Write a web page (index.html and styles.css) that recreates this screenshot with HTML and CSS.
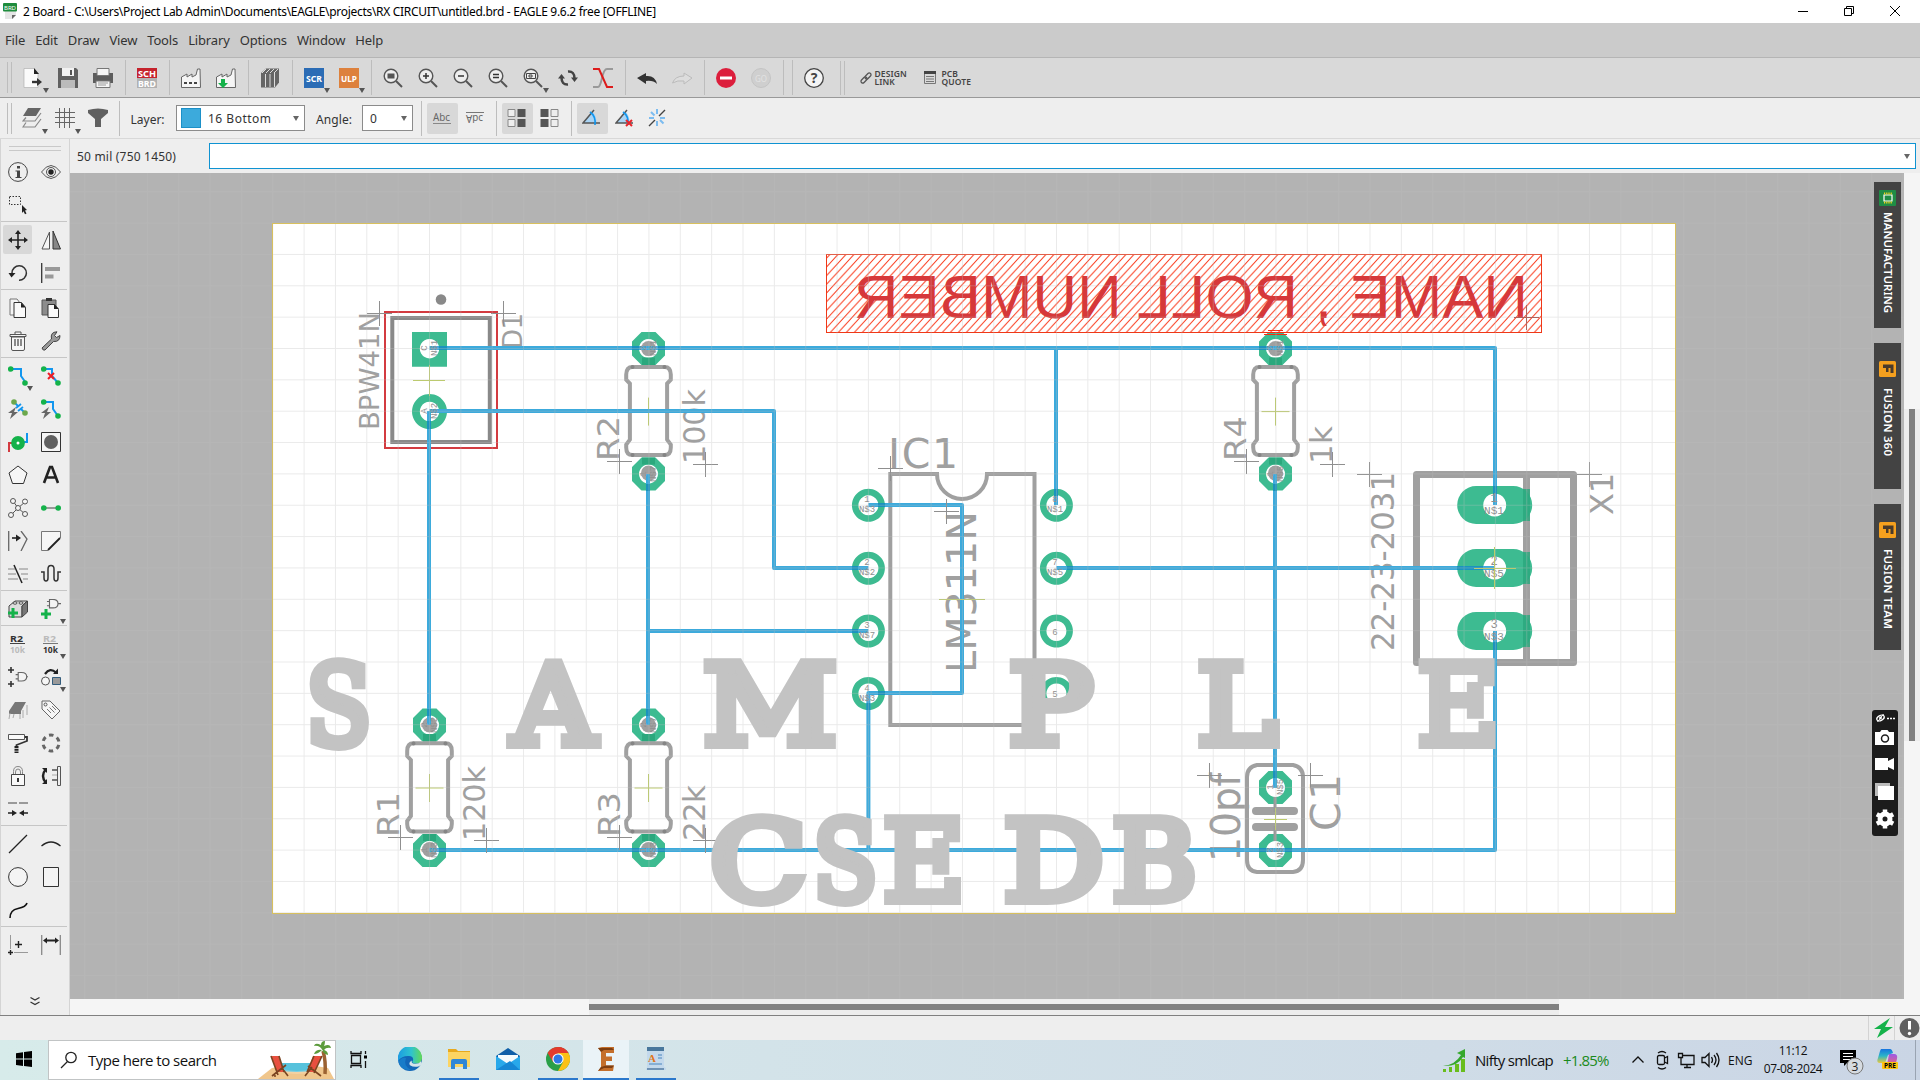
FILE: index.html
```html
<!DOCTYPE html>
<html lang="en">
<head>
<meta charset="utf-8">
<title>2 Board - EAGLE 9.6.2 free</title>
<link rel="stylesheet" href="styles.css">
</head>
<body>
<svg class="defs" width="0" height="0">
  <defs>
    <g id="lens"><circle cx="8" cy="8" r="6.8" fill="#eee" stroke="#555" stroke-width="1.4"/><path d="M13 13l6 6" stroke="#555" stroke-width="2"/></g>
    <g id="gate"><path d="M3 1.500h4q6 0 6 5t-6 5H3zM13 6.500h4M0 4h3M0 9h3" fill="#f4f4f4" stroke="#666" stroke-width="1.300"/></g>
    <g id="angle"><path d="M1 15L11 4q4 5 3.500 11z" fill="#a9d4f5"/><path d="M12 2L1 15h17" fill="none" stroke="#555" stroke-width="1.500"/><path d="M8 4q6 4 5 13" fill="none" stroke="#1296ee" stroke-width="1.600"/></g>
    <g id="fusion"><rect width="17" height="16" rx="1.500" fill="#f5a01e"/><path d="M4 3.500h10.500v8.500h-3V7H9.500v4H7V7H4z" fill="#4a3a2a"/></g>
    <g id="cross"><path d="M-12.500 0h25M0-12.500v25"/></g>
    <g id="oct"><path fill-rule="evenodd" d="M-7-16.500H7L16.500-7V7L7 16.500H-7L-16.500 7V-7zM0-9.500a9.500 9.500 0 1 0 .01 0z"/></g>
    <g id="ring"><path fill-rule="evenodd" d="M0-16.500a16.500 16.500 0 1 0 .01 0zM0-10a10 10 0 1 0 .01 0z"/></g>
    <g id="longpad"><path fill-rule="evenodd" d="M-18.500-19h37a19 19 0 0 1 0 38h-37a19 19 0 0 1 0-38zM0-11.500a11.500 11.500 0 1 0 .01 0z"/></g>
    <g id="resistor">
      <circle r="7.500" fill="#a0a0a0"/><circle cy="124.500" r="7.500" fill="#a0a0a0"/>
      <use href="#oct" fill="#3dbb91"/><use href="#oct" y="125.400" fill="#3dbb91"/>
      <path d="M-6.500 9h13v7.500h-13zM-6.500 109h13v7h-13z" fill="#2ba87d"/>
      <path d="M-16 18.300H16Q22.300 18.300 22.300 26V31L18.600 35V91L22.300 96V99Q22.300 106.500 16 106.500H-16Q-22.300 106.500-22.300 99V96L-18.600 91V35L-22.300 31V26Q-22.300 18.300-16 18.300Z" fill="none" stroke="#a0a0a0" stroke-width="4"/>
      <path d="M-16 16.500a2 2 0 1 0 .01 0zM16 16.500a2 2 0 1 0 .01 0zM-16 104.500a2 2 0 1 0 .01 0zM16 104.500a2 2 0 1 0 .01 0z" fill="#858585"/>
      <path d="M-14 63h28M0 49v28" stroke="#bccb66"/>
    </g>
    <pattern id="hatch" width="8" height="8.700" patternUnits="userSpaceOnUse"><path d="M-1 9.790L9-1.090M-1 1.090L1-1.090M7 9.790L9 7.610" stroke="#fa3a1c" stroke-width="1"/></pattern>
    <pattern id="grid" x="429" y="348" width="31.350" height="31.350" patternUnits="userSpaceOnUse"><path d="M.5 0V31.350M0 .5H31.350" stroke="#bebebe" stroke-opacity=".32"/></pattern>
  </defs>
</svg>

<header class="titlebar">
  <svg class="app" width="14" height="16" viewBox="0 0 14 16"><path d="M2 6h11v6l-3 4H2z" fill="#e6e6e6"/><path d="M13 12H9v4z" fill="#666"/><rect width="14" height="8.500" rx="1" fill="#1f8c3d"/><text x="1" y="6.500" font-size="5.500" fill="#fff" textLength="12" lengthAdjust="spacingAndGlyphs">BRD</text></svg>
  <span class="caption">2 Board - C:\Users\Project Lab Admin\Documents\EAGLE\projects\RX CIRCUIT\untitled.brd - EAGLE 9.6.2 free [OFFLINE]</span>
  <div class="winbtns">
    <svg width="46" height="22"><path d="M18 10.500h10" stroke="#000"/></svg>
    <svg width="46" height="22"><path d="M18.500 7.500h7v7h-7zM20.500 7.500v-2h7v7h-2" fill="none" stroke="#000"/></svg>
    <svg width="46" height="22"><path d="M18 5l10 10M28 5L18 15" stroke="#000"/></svg>
  </div>
</header>

<nav class="menubar"><span>File</span><span>Edit</span><span>Draw</span><span>View</span><span>Tools</span><span>Library</span><span>Options</span><span>Window</span><span>Help</span></nav>

<div class="toolbar main">
  <i class="grip"></i>
  <b class="btn drop"><svg width="20" height="20"><path d="M1 .5h10l4 5v14H1z" fill="#fafafa" stroke="#aaa" stroke-width=".6"/><path d="M11 0l5 6h-5z" fill="#222"/><path d="M9 14h6" stroke="#333" stroke-width="2.400"/><path d="M14 10l5 4-5 4z" fill="#333"/></svg></b>
  <b class="btn"><svg width="20" height="20"><path d="M0 0h18l2 2v18H0z" fill="#606060"/><path d="M4 0h12v8H4z" fill="#f2f2f2"/><path d="M12 2h2v5h-2z" fill="#555"/><path d="M3 12h14v8H3z" fill="#bbb"/></svg></b>
  <b class="btn"><svg width="20" height="20"><path d="M0 5h20v10H0z" fill="#5d5d5d"/><path d="M4 .5h12v7H4z" fill="#f5f5f5" stroke="#777"/><path d="M3 13h14v6.500H3z" fill="#f5f5f5" stroke="#777"/><path d="M5 15h10M5 17h8" stroke="#999"/></svg></b>
  <i class="sep"></i>
  <b class="btn"><svg width="20" height="20"><path d="M0 0h20v10H0z" fill="#c5232d"/><path d="M0 10h20v10H0z" fill="#b2b2b2"/><g font-size="9.500" font-weight="bold" fill="#fff"><text x="1" y="8.500" textLength="18" lengthAdjust="spacingAndGlyphs">SCH</text><text x="1" y="18.500" textLength="18" lengthAdjust="spacingAndGlyphs">BRD</text></g></svg></b>
  <i class="sep"></i>
  <b class="btn"><svg width="20" height="20"><path d="M.5 19.500V9L6 6v3l5-3v3l4-2 1.500-6h2.500l.5 18.500z" fill="#f5f5f5" stroke="#666"/><path d="M3 15h14" stroke="#444" stroke-width="2" stroke-dasharray="3 2"/></svg></b>
  <b class="btn"><svg width="20" height="20"><path d="M.5 19.500V9L6 6v3l5-3v3l4-2 1.500-6h2.500l.5 18.500z" fill="#f5f5f5" stroke="#666"/><path d="M5 11h4v4h3l-5 5-5-5h3z" fill="#14b24a"/></svg></b>
  <i class="sep"></i>
  <b class="btn"><svg width="20" height="20"><path d="M1 5l5-4.500h13v14L15 19.500H1z" fill="#666"/><path d="M2 5l4-4M6 5l4-4M10 5l4-4M14 5l4-4M5.500 6v13M10 6v13M14.500 5v14" stroke="#ddd"/></svg></b>
  <i class="sep"></i>
  <b class="btn drop"><svg width="20" height="20"><path d="M0 0h20v20H0z" fill="#2b6cb5"/><text x="2" y="13.500" font-size="9.500" font-weight="bold" fill="#fff" textLength="16" lengthAdjust="spacingAndGlyphs">SCR</text></svg></b>
  <b class="btn drop"><svg width="20" height="20"><path d="M0 0h20v20H0z" fill="#dd813d"/><text x="2" y="13.500" font-size="9.500" font-weight="bold" fill="#fff" textLength="16" lengthAdjust="spacingAndGlyphs">ULP</text></svg></b>
  <i class="sep"></i>
  <b class="btn"><svg width="20" height="20"><use href="#lens"/><path d="M4.500 5.500h7v5h-7z" fill="#555"/></svg></b>
  <b class="btn"><svg width="20" height="20"><use href="#lens"/><path d="M5 8h6M8 5v6" stroke="#333" stroke-width="1.500"/></svg></b>
  <b class="btn"><svg width="20" height="20"><use href="#lens"/><path d="M5 8h6" stroke="#333" stroke-width="1.500"/></svg></b>
  <b class="btn"><svg width="20" height="20"><use href="#lens"/><path d="M5 6.500h6M5 9.500h6" stroke="#333" stroke-width="1.500"/></svg></b>
  <b class="btn drop"><svg width="20" height="20"><use href="#lens"/><path d="M3.500 5.500h9v5h-9zM6 7h3v2H6z" fill="none" stroke="#444"/></svg></b>
  <b class="btn"><svg width="20" height="20"><path d="M10 3.500q6.500-.5 6.500 7M10 16.500q-6.500.5-6.500-7" fill="none" stroke="#444" stroke-width="2.500"/><path d="M13 9.500h7L16.500 14zM0 10.500L3.500 6 7 10.500z" fill="#444"/></svg></b>
  <b class="btn"><svg width="20" height="20"><path d="M0 19h5q2 0 4-9t5-9h6" fill="none" stroke="#999" stroke-width="2"/><path d="M0 1h6l8 18h6" fill="none" stroke="#dd1c1c" stroke-width="2"/></svg></b>
  <i class="sep"></i>
  <b class="btn"><svg width="20" height="20"><path d="M0 10l9-5v3q9-1 11 8-4-4-11-3v3z" fill="#333"/></svg></b>
  <b class="btn"><svg width="20" height="20"><path d="M20 10l-8-5v3Q3 8 .500 15q5-3 11.500-2v3z" fill="#ddd" stroke="#bbb"/></svg></b>
  <i class="sep"></i>
  <b class="btn"><svg width="20" height="20"><circle cx="10" cy="10" r="10" fill="#dc1e3c"/><path d="M4 10h12" stroke="#fff" stroke-width="3"/></svg></b>
  <b class="btn"><svg width="20" height="20"><circle cx="10" cy="10" r="9.500" fill="#cfcfcf" stroke="#c4c4c4"/><text x="4" y="13.500" font-size="9.500" fill="#e2e2e2" textLength="12" lengthAdjust="spacingAndGlyphs">GO</text></svg></b>
  <i class="sep"></i><i class="sep"></i>
  <b class="btn"><svg width="20" height="20"><circle cx="10" cy="10" r="9.300" fill="#f4f4f4" stroke="#444" stroke-width="1.300"/><text x="10" y="15" text-anchor="middle" font-size="14" font-weight="bold" fill="#444">?</text></svg></b>
  <i class="grip second"></i>
  <div class="link"><svg width="12" height="12" viewBox="0 0 12 12"><g fill="none" stroke="#555" stroke-width="1.300"><rect x="-3.500" y="-1.800" width="7" height="3.600" rx="1.800" transform="translate(4 8) rotate(-45)"/><rect x="-3.500" y="-1.800" width="7" height="3.600" rx="1.800" transform="translate(8 4) rotate(-45)"/></g></svg><span>DESIGN<br>LINK</span></div>
  <div class="link quote"><svg width="12" height="13"><path d="M0 0h12v3H0z" fill="#444"/><path d="M.5 3v9.500h11V3M2 5.500h8M2 8h8M2 10.500h8" fill="none" stroke="#777"/></svg><span>PCB<br>QUOTE</span></div>
</div>

<div class="toolbar params">
  <i class="grip"></i>
  <b class="btn drop"><svg width="20" height="20"><path d="M1 8L6 0h13l-5 8z" fill="#666"/><path d="M4 9.500L1 13h12l6-8M4 14.500L1 19h12l6-8" fill="none" stroke="#888" stroke-width="1.200"/></svg></b>
  <b class="btn drop"><svg width="20" height="20"><path d="M4.500 0v20M9.500 0v20M14.500 0v20M0 4.500h20M0 9.500h20M0 14.500h20" stroke="#666"/></svg></b>
  <b class="btn"><svg width="20" height="20"><path d="M0 2q10-3 20 0v3l-7 6v8H7v-8L0 5z" fill="#606060"/></svg></b>
  <i class="sep"></i>
  <span class="lbl layer">Layer:</span>
  <div class="combo wide"><i class="swatch"></i><span class="value">16 Bottom</span><i class="arrow"></i></div>
  <span class="lbl ang">Angle:</span>
  <div class="combo narrow"><span>0</span><i class="arrow"></i></div>
  <i class="sep first"></i>
  <b class="btn on"><svg width="20" height="14"><text x="1" y="10" font-size="10.500" fill="#666" textLength="17" lengthAdjust="spacingAndGlyphs">Abc</text><path d="M1 12.500h18" stroke="#888"/></svg></b>
  <b class="btn"><svg width="20" height="14"><g transform="matrix(1 0 0 -1 0 4)"><text x="1" y="0" font-size="10.500" fill="#666" textLength="17" lengthAdjust="spacingAndGlyphs">Abc</text></g><path d="M1 1.500h18" stroke="#777"/></svg></b>
  <i class="sep"></i>
  <b class="btn on"><svg width="20" height="20"><path d="M1 1.500h7v7H1zM1 11.500h7v7H1z" fill="#eee" stroke="#888"/><path d="M10.500 1h8v8h-8zM10.500 11h8v8h-8z" fill="#555"/></svg></b>
  <b class="btn"><svg width="20" height="20"><path d="M11 1.500h7v7h-7zM11 11.500h7v7h-7z" fill="#eee" stroke="#888"/><path d="M.5 1h8v8h-8zM.5 11h8v8h-8z" fill="#555"/></svg></b>
  <i class="sep"></i>
  <b class="btn on"><svg width="20" height="20"><use href="#angle"/></svg></b>
  <b class="btn"><svg width="20" height="20"><use href="#angle"/><path d="M11 12l6 6M17 12l-6 6" stroke="#e8252b" stroke-width="2"/></svg></b>
  <b class="btn"><svg width="20" height="20"><path d="M9 1v5M9 13v5M1 10h5M12 10h5M3 4l3.500 3.500M12 12l3.500 3.500" stroke="#7cbcf0" stroke-width="2"/><path d="M1 18l6-6M11 8l6-6" stroke="#444" stroke-width="1.400"/></svg></b>
</div>

<main class="work">
  <aside class="palette">
    <i class="hgrip"></i>
    <section>
      <b><svg width="20" height="20"><circle cx="10" cy="10" r="9.400" fill="none" stroke="#444"/><path d="M9 4h3v2.500H9zM7.500 8.500H12V15h1.500v1H7.500v-1H9V9.500H7.500z" fill="#444"/></svg></b>
      <b><svg width="20" height="20"><path d="M.5 10q9.500-13 19 0-9.500 13-19 0z" fill="none" stroke="#555"/><circle cx="10" cy="10" r="4.500" fill="none" stroke="#555"/><circle cx="10" cy="10" r="2.700" fill="#222"/></svg></b>
      <b><svg width="20" height="20"><path d="M1.500 1.500h11v8h-11z" fill="none" stroke="#333" stroke-dasharray="1.500 1.500"/><path d="M14 10l5 5-2 .5 1.500 3-1.500.8-1.500-3-1.500 1.700z" fill="#222"/></svg></b>
    </section>
    <section>
      <b class="on"><svg width="20" height="20"><path d="M10 2v16M2 10h16" stroke="#222" stroke-width="1.600"/><path d="M10 0l3 4H7zM10 20l3-4H7zM0 10l4-3v6zM20 10l-4-3v6z" fill="#222"/></svg></b>
      <b><svg width="20" height="20"><path d="M8.500 2v17H1z" fill="#f6f6f6" stroke="#555"/><path d="M12 1v18h7.500z" fill="#888" stroke="#333"/></svg></b>
      <b><svg width="20" height="20"><path d="M4 10A7.200 7.200 0 1 1 11 17.200" fill="none" stroke="#333" stroke-width="1.500"/><path d="M.5 10h7l-4 4.500z" fill="#222"/></svg></b>
      <b><svg width="20" height="20"><path d="M.7 0v20" stroke="#333" stroke-width="1.300"/><path d="M4 4h15v4H4zM4 11.500h8.500v4H4z" fill="#999"/></svg></b>
    </section>
    <section>
      <b><svg width="20" height="20"><path d="M2 1h7l3 4v12H2z" fill="#f5f5f5" stroke="#777"/><path d="M6 4.500h7.500l4 5v10H6z" fill="#fafafa" stroke="#333"/><path d="M13 4.500l5 5h-5z" fill="#222"/></svg></b>
      <b><svg width="20" height="20"><path d="M1 2h14v15H1z" fill="#8c8c8c" stroke="#555"/><path d="M5 0h6v3H5z" fill="#333"/><path d="M7 6.500h6.500l4 5v8H7z" fill="#fafafa" stroke="#333"/><path d="M13 6l5 5h-5z" fill="#222"/></svg></b>
      <b><svg width="20" height="20"><path d="M3.500 6h13v12q0 1.500-1.500 1.500H5Q3.500 19.500 3.500 18zM2 3.500h16v2H2zM7 3V1h6v2" fill="#f5f5f5" stroke="#555"/><path d="M7 8v7M10 8v7M13 8v7" stroke="#666" stroke-width="1.500"/></svg></b>
      <b><svg width="20" height="20"><path d="M1 17L10.500 8Q9 1 16 .800L13.500 4.500l2 2L19 4.500Q19 11 12.500 10.500L4 19q-2 1-3-2z" fill="#999" stroke="#444"/></svg></b>
    </section>
    <section>
      <b class="drop"><svg width="20" height="20"><path d="M3 3h10v7l5 7" fill="none" stroke="#1296ee" stroke-width="2"/><circle cx="2.700" cy="3" r="2.800" fill="#14b24a"/><circle cx="17" cy="17" r="2.800" fill="#14b24a"/></svg></b>
      <b><svg width="20" height="20"><path d="M3 3h8v7l6 7" fill="none" stroke="#1296ee" stroke-width="2"/><path d="M7 7l6 6M13 7l-6 6" stroke="#ee1c24" stroke-width="2"/><circle cx="2.700" cy="3" r="2.800" fill="#14b24a"/><circle cx="17" cy="17" r="2.800" fill="#14b24a"/></svg></b>
      <b><svg width="20" height="20"><path d="M6 3l4 4M13 10l4 4M8 9l5-4M10 12l5-4" stroke="#1296ee" stroke-width="1.800"/><circle cx="6" cy="3" r="2.800" fill="#6ca84c"/><circle cx="17" cy="14" r="2.800" fill="#6ca84c"/><path d="M8 8l-8 6h4l-2 6 8-7H6z" fill="#666"/></svg></b>
      <b><svg width="20" height="20"><path d="M3 3h9v7l5 7" fill="none" stroke="#1296ee" stroke-width="2"/><circle cx="2.700" cy="3" r="2.800" fill="#14b24a"/><circle cx="17" cy="17" r="2.800" fill="#14b24a"/><path d="M8 8l-8 6h4l-2 6 8-7H6z" fill="#666"/></svg></b>
      <b><svg width="20" height="20"><path d="M1 20v-9h5" fill="none" stroke="#d33b40" stroke-width="2"/><path d="M19 1v9h-5" fill="none" stroke="#1296ee" stroke-width="2"/><circle cx="10" cy="11" r="4.200" fill="#fff" stroke="#14b24a" stroke-width="5.400"/></svg></b>
      <b><svg width="20" height="20"><path d="M.5.500h19v19H.5z" fill="#f5f5f5" stroke="#333"/><circle cx="10" cy="10" r="7" fill="#606060"/></svg></b>
      <b><svg width="20" height="20"><path d="M10 1l9 7-3.500 10.500h-11L1 8z" fill="#f6f6f6" stroke="#333"/></svg></b>
      <b><svg width="20" height="20"><path d="M3 18L9 2h2l6 16M5.500 12.500h9" fill="none" stroke="#222" stroke-width="2.600"/></svg></b>
      <b><svg width="20" height="20"><path d="M5 3l5 7 7-6M3 17l7-7 7 6" fill="none" stroke="#555"/><g fill="#f5f5f5" stroke="#555"><circle cx="5" cy="3" r="2.500"/><circle cx="17" cy="3.500" r="2.500"/><circle cx="3" cy="17" r="2.500"/><circle cx="17" cy="16" r="2.500"/><circle cx="10" cy="10" r="2.500"/></g></svg></b>
      <b><svg width="20" height="20"><path d="M3 10h14" stroke="#999" stroke-width="2"/><circle cx="2.800" cy="10" r="2.800" fill="#14b24a"/><circle cx="17.200" cy="10" r="2.800" fill="#14b24a"/></svg></b>
      <b><svg width="20" height="20"><path d="M.7 0v20M13 0l6 8-6 12" fill="none" stroke="#666" stroke-width="1.300"/><path d="M4 7h5" stroke="#222" stroke-width="1.600"/><path d="M8 3.500l5 3.500-5 3.500z" fill="#222"/></svg></b>
      <b><svg width="20" height="20"><path d="M7 19.500H.5V.5h19V7" fill="#f6f6f6" stroke="#777"/><path d="M7 19L19 7" stroke="#222" stroke-width="1.800"/></svg></b>
      <b><svg width="20" height="20"><path d="M0 5h7M11 5h9M0 10h8M13 10h7M0 15h10M15 15h5" stroke="#aaa" stroke-width="1.500"/><path d="M6 1l8 18" stroke="#222" stroke-width="1.500"/></svg></b>
      <b><svg width="20" height="20"><path d="M0 8h3v6q0 3 2 3t2-3V5q0-3.500 3-3.500T13 5v9q0 3 2 3t2-3V8h3" fill="none" stroke="#333" stroke-width="1.500"/></svg></b>
    </section>
    <section>
      <b><svg width="20" height="20"><path d="M1 7l6-5h12l-5 5v11H1z" fill="#ddd" stroke="#444"/><path d="M14 7l5.500-5v11L14 18z" fill="#777" stroke="#444"/><ellipse cx="7" cy="4" rx="2" ry="1.200" fill="#fff" stroke="#444"/><ellipse cx="13" cy="4" rx="2" ry="1.200" fill="#fff" stroke="#444"/><path d="M0 14h10M5 9v10" stroke="#14b24a" stroke-width="3"/></svg></b>
      <b class="drop"><svg width="20" height="20"><use href="#gate" x="7" y="-1" transform="scale(.85)"/><path d="M0 15h10M5 10v10" stroke="#14b24a" stroke-width="3"/></svg></b>
    </section>
    <section>
      <b><svg width="20" height="20"><path d="M2 9.500h15" stroke="#444"/><g font-size="9.500" font-weight="bold"><text x="2" y="8" fill="#333" textLength="13" lengthAdjust="spacingAndGlyphs">R2</text><text x="2" y="18.500" fill="#bbb" textLength="15" lengthAdjust="spacingAndGlyphs">10k</text></g></svg></b>
      <b class="drop"><svg width="20" height="20"><path d="M2 9.500h15" stroke="#777"/><g font-size="9.500" font-weight="bold"><text x="2" y="8" fill="#bbb" textLength="13" lengthAdjust="spacingAndGlyphs">R2</text><text x="2" y="18.500" fill="#333" textLength="15" lengthAdjust="spacingAndGlyphs">10k</text></g></svg></b>
      <b><svg width="20" height="20"><use href="#gate" x="9" y="5" transform="scale(.85)"/><path d="M0 3h6M3 0v6M0 17h6M3 14v6" stroke="#333" stroke-width="1.600"/></svg></b>
      <b class="drop"><svg width="20" height="20"><circle cx="4.500" cy="14" r="4" fill="#f6f6f6" stroke="#555"/><path d="M11.500 10.500h8v7h-8z" fill="#999" stroke="#345d7d"/><path d="M4 7q5-7 11-1.500" fill="none" stroke="#222" stroke-width="2.200"/><path d="M12 7h5V1.500z" fill="#222"/></svg></b>
      <b><svg width="20" height="20"><path d="M1 11l6-9h11l-5 9zM1 11h12v3H1z" fill="#777"/><path d="M2 13l-1 6M6 14l-1 4M12 14v5M15 10v8M19 5v10" stroke="#aaa"/></svg></b>
      <b><svg width="20" height="20"><path d="M1 1h8l10 10-8 8L1 9z" fill="#f6f6f6" stroke="#666"/><circle cx="4.500" cy="4.500" r="1.500" fill="none" stroke="#555"/><path d="M6 9l4 4M8.500 7.500l5 5M11 6l4 4" stroke="#777"/></svg></b>
      <b><svg width="20" height="20"><path d="M.5 1.500h16v5H.5z" fill="#fafafa" stroke="#555"/><path d="M17 4h2v4L8.500 12v3" fill="none" stroke="#333" stroke-width="1.800"/><path d="M8.500 13v7" stroke="#222" stroke-width="4" stroke-dasharray="2 .7"/></svg></b>
      <b><svg width="20" height="20"><circle cx="10" cy="10" r="8" fill="none" stroke="#666" stroke-width="3" stroke-dasharray="4.500 3.880" stroke-dashoffset="-10.300"/></svg></b>
      <b><svg width="20" height="20"><path d="M5.500 9V5.500q0-5 4.500-5t4.500 5V9h-2V6q0-3-2.500-3T7.500 6v3" fill="none" stroke="#888"/><path d="M3.500 8.500h13v11h-13z" fill="#f8f8f8" stroke="#444"/><path d="M10 12v4" stroke="#333" stroke-width="2"/></svg></b>
      <b><svg width="20" height="20"><path d="M5 3q-6 7 0 14" fill="none" stroke="#222" stroke-width="2.400"/><path d="M1 2h5v5zM1 18h5v-5z" fill="#222"/><path d="M11 4h6M11 14h6" stroke="#777" stroke-width="2"/><path d="M11 9h6" stroke="#aaa"/><path d="M16.500.500h3v19h-3z" fill="#eee" stroke="#555"/></svg></b>
      <b><svg width="20" height="20"><path d="M0 4h9M11 4h9" stroke="#999" stroke-width="2"/><path d="M0 14h6M14 14h6" stroke="#222" stroke-width="1.600"/><path d="M4 11l5 3-5 3zM16 11l-5 3 5 3z" fill="#222"/></svg></b>
    </section>
    <section>
      <b><svg width="20" height="20"><path d="M1 19L19 1" stroke="#222" stroke-width="1.300"/></svg></b>
      <b><svg width="20" height="20"><path d="M.5 12q9.500-8 19 0" fill="none" stroke="#222" stroke-width="1.300"/></svg></b>
      <b><svg width="20" height="20"><circle cx="10" cy="10" r="9.400" fill="#f4f4f4" stroke="#333"/></svg></b>
      <b><svg width="20" height="20"><path d="M2.500.500h15v19h-15z" fill="#f4f4f4" stroke="#333"/></svg></b>
      <b><svg width="20" height="20"><path d="M2 18q0-8 8-9.500T19 3" fill="none" stroke="#111" stroke-width="1.600"/></svg></b>
    </section>
    <section>
      <b><svg width="20" height="20"><path d="M2.500 0v14M6 17.500h14" stroke="#999"/><path d="M10.500 6v7M7 9.500h7M2.500 15v5M0 17.500h5" stroke="#222" stroke-width="1.400"/></svg></b>
      <b><svg width="20" height="20"><path d="M.7 0v20M19.300 0v20" stroke="#888" stroke-width="1.300"/><path d="M4 5.500h12" stroke="#222" stroke-width="2"/><path d="M2 5.500l4-3v6zM18 5.500l-4-3v6z" fill="#222"/></svg></b>
    </section>
    <svg class="more" width="12" height="10"><path d="M1.500 1.500L6 4l4.500-2.500M1.500 6L6 8.500 10.500 6" fill="none" stroke="#333" stroke-width="1.300"/></svg>
  </aside>

  <div class="editor">
    <div class="cmdrow"><span>50 mil (750 1450)</span><div class="cmd"><i class="arrow"></i></div></div>
    <div class="canvas">
      <svg class="board" viewBox="70 173 1834 826" width="1834" height="826">
        <rect x="70" y="173" width="1834" height="826" fill="#b3b3b3"/>
        <rect x="272.500" y="223.500" width="1403" height="690" fill="#fff"/>

        <g class="silk" fill="none" stroke="#a0a0a0" stroke-width="4">
          <path d="M937 474H890.300V725H1034.500V474H987A24.800 24.800 0 0 1 937 474Z"/>
          <path d="M1416.500 474.500H1573.500V662.500H1416.500ZM1526.500 474.500V662.500" stroke-width="7" stroke-linejoin="round"/>
          <path d="M1257 765H1293Q1303 767 1303 777V860Q1303 871 1293 872H1257Q1247 871 1247 860V777Q1247 767 1257 765Z"/>
          <path d="M1256 811H1294M1256 827H1294" stroke-width="8" stroke-linecap="round"/>
          <rect x="392.300" y="318" width="97.500" height="124" stroke="#898989"/>
        </g>
        <circle cx="441" cy="299.500" r="5.300" fill="#898989"/>
        <rect x="385" y="312" width="112" height="136" fill="none" stroke="#d33b40" stroke-width="2"/>

        <g class="names">
          <text transform="translate(379 430) rotate(-90)" font-size="26" textLength="118" lengthAdjust="spacingAndGlyphs">BPW41N</text>
          <text transform="translate(522 349) rotate(-90)" font-size="26" textLength="36">D1</text>
          <text transform="translate(619 461) rotate(-90)" font-size="31" textLength="45" lengthAdjust="spacingAndGlyphs">R2</text>
          <text transform="translate(705 464) rotate(-90)" font-size="31" textLength="75" lengthAdjust="spacingAndGlyphs">100k</text>
          <text transform="translate(1246 461) rotate(-90)" font-size="31" textLength="45" lengthAdjust="spacingAndGlyphs">R4</text>
          <text transform="translate(1332 464) rotate(-90)" font-size="31" textLength="38">1k</text>
          <text transform="translate(399 837) rotate(-90)" font-size="31" textLength="45" lengthAdjust="spacingAndGlyphs">R1</text>
          <text transform="translate(485 841) rotate(-90)" font-size="31" textLength="75" lengthAdjust="spacingAndGlyphs">120k</text>
          <text transform="translate(619.500 837) rotate(-90)" font-size="31" textLength="45" lengthAdjust="spacingAndGlyphs">R3</text>
          <text transform="translate(705 841) rotate(-90)" font-size="31" textLength="56">22k</text>
          <text transform="translate(1394 651) rotate(-90)" font-size="32" textLength="179" lengthAdjust="spacingAndGlyphs">22-23-2031</text>
          <text transform="translate(1613 515) rotate(-90)" font-size="32" textLength="42">X1</text>
          <text transform="translate(1340 831) rotate(-90)" font-size="41" textLength="57">C1</text>
          <text transform="translate(1240 862) rotate(-90)" font-size="40" textLength="89" lengthAdjust="spacingAndGlyphs">10pf</text>
          <text transform="translate(976 673) rotate(-90)" font-size="41" textLength="162" lengthAdjust="spacingAndGlyphs">LM311N</text>
          <text x="888" y="468" font-size="41" textLength="70">IC1</text>
        </g>

        <use href="#resistor" x="648.500" y="348.600"/><use href="#resistor" x="1275.500" y="348.600"/>
        <use href="#resistor" x="429.500" y="725"/><use href="#resistor" x="648.500" y="725"/>
        <g fill="#3dbb91">
          <path fill-rule="evenodd" d="M412 332H447V366.700H412ZM429.500 339a9.700 9.700 0 1 0 .01 0z"/>
          <path fill-rule="evenodd" d="M429.500 394a17.500 17.500 0 1 0 .01 0zM429.500 401.800a9.700 9.700 0 1 0 .01 0z"/>
          <use href="#ring" x="868.400" y="505.300"/><use href="#ring" x="868.400" y="568.300"/><use href="#ring" x="868.400" y="631"/><use href="#ring" x="868.400" y="693.500"/>
          <use href="#ring" x="1056.400" y="505.300"/><use href="#ring" x="1056.400" y="568.300"/><use href="#ring" x="1056.400" y="631"/><use href="#ring" x="1056.400" y="693.500"/>
          <use href="#longpad" x="1494.700" y="505"/><use href="#longpad" x="1494.700" y="568"/><use href="#longpad" x="1494.700" y="631"/>
          <use href="#oct" x="1275.500" y="787.500"/><use href="#oct" x="1275.500" y="850.500"/>
        </g>
        <path d="M1275 797V812M1275 826V841" stroke="#999" stroke-width="3"/>
        <path d="M1526.500 489V521M1526.500 552V584M1526.500 615V647" stroke="#2ba87d" stroke-width="7" stroke-opacity=".8"/>

        <g class="traces" fill="none" stroke="#3caadc" stroke-width="4" stroke-linejoin="round">
          <path d="M429.500 348H1495V505M1056 348V505M429.500 411H774V568H868.400M429 411V725M648 474V725M648 631H868.400M868.400 505H962V693H868.400V850M1056.400 568H1494M1275 474V788M429.500 850H1495V631"/>
        </g>
        <g fill="none" stroke="#148fb9" stroke-width="4" stroke-opacity=".85">
          <path d="M439 348H447M429 421V429M632 348H639M658 348H665M1259 348H1266M1285 348H1292M1056 489V496M1067 568H1073M852 568H858M852 631H858M878 505H885M878 693H885M868.400 703V710M429 709V716M648 709V716M648 484V491M1275 484V491M1275 771V778M439 850H446M632 850H639M658 850H665M1259 850H1266M1285 850H1292M1495 486V494M1457 568H1483M1495 642V650"/>
        </g>

        <rect x="826.500" y="254.500" width="715" height="78" fill="url(#hatch)" stroke="#f03818"/>
        <path d="M1264 334.500h23M1266 332.500h19M1268 330.500h15" stroke="#fa2b10"/>
        <text class="owner" transform="translate(1528 317.500) scale(-1 1)" font-size="62" textLength="674" lengthAdjust="spacingAndGlyphs" xml:space="preserve">NAME , ROLL NUMBER</text>

        <g class="pins" text-anchor="middle">
          <text x="867" y="502">1</text><text x="867" y="512">N$3</text><text x="867" y="565">2</text><text x="867" y="575">N$2</text><text x="867" y="628">3</text><text x="867" y="638">N$7</text><text x="867" y="691">4</text><text x="867" y="701">N$3</text>
          <text x="1055" y="502">8</text><text x="1055" y="512">N$1</text><text x="1055" y="565">7</text><text x="1055" y="575">N$5</text><text x="1055" y="635">6</text><text x="1055" y="697">5</text>
          <text x="1494" y="502" font-size="12">1</text><text x="1494" y="514" font-size="11">N$1</text><text x="1494" y="565" font-size="12">2</text><text x="1494" y="577" font-size="11">N$5</text><text x="1494" y="628" font-size="12">3</text><text x="1494" y="640" font-size="11">N$3</text>
          <g transform="rotate(-90)">
            <text x="-348" y="427">C</text><text x="-348" y="437">N$1</text><text x="-411" y="427">A</text><text x="-411" y="437">N$2</text>
            <text x="-348" y="646">2</text><text x="-348" y="656">N$1</text><text x="-474" y="646">1</text><text x="-474" y="656">N$7</text>
            <text x="-348" y="1273">2</text><text x="-348" y="1283">N$1</text><text x="-474" y="1273">1</text><text x="-474" y="1283">N$5</text>
            <text x="-725" y="427">2</text><text x="-725" y="437">N$2</text><text x="-850" y="427">1</text><text x="-850" y="437">N$3</text>
            <text x="-725" y="646">2</text><text x="-725" y="656">N$7</text><text x="-850" y="646">1</text><text x="-850" y="656">N$3</text>
            <text x="-787" y="1273">1</text><text x="-787" y="1283">N$5</text><text x="-850" y="1273">2</text><text x="-850" y="1283">N$3</text>
          </g>
        </g>
        <g stroke="#8f8f8f">
          <use href="#cross" x="379.500" y="313.500"/><use href="#cross" x="503.500" y="313.500"/><use href="#cross" x="619.500" y="461.500"/><use href="#cross" x="705.500" y="464.500"/><use href="#cross" x="890.500" y="468.500"/><use href="#cross" x="946.500" y="511.500"/><use href="#cross" x="1246.500" y="461.500"/><use href="#cross" x="1332.500" y="464.500"/><use href="#cross" x="1369.500" y="474.500"/><use href="#cross" x="1589.500" y="474.500"/><use href="#cross" x="400.500" y="837.500"/><use href="#cross" x="486.500" y="840.500"/><use href="#cross" x="619.500" y="837.500"/><use href="#cross" x="705.500" y="840.500"/><use href="#cross" x="1209.500" y="775.500"/><use href="#cross" x="1310.500" y="775.500"/>
          <use href="#cross" x="1526.500" y="317.500" stroke="#a84840"/>
        </g>
        <path d="M413 380.500H445M429.500 365V396M939 599.500H985M1474 568.500H1516M1494.500 547V589M1264 819.500H1287M1275.500 808V830" stroke="#bccb66"/>
        <rect x="70" y="173" width="1834" height="826" fill="url(#grid)"/>
        <rect x="272.500" y="223.500" width="1403" height="690" fill="none" stroke="#d8c05e"/>

        <g class="stamp">
          <text transform="translate(306 744) scale(.87 1)">S</text>
          <text transform="translate(512 744) scale(1.050 1)">A</text>
          <text transform="translate(703 744) scale(1.190 1)">M</text>
          <text transform="translate(1008.500 744) scale(1.150 1)">P</text>
          <text transform="translate(1197 744) scale(1.100 1)">L</text>
          <text transform="translate(1417.500 744) scale(1.020 1)">E</text>
          <text transform="translate(710 900) scale(1.150 1)">C</text>
          <text transform="translate(813 900) scale(.86 1)">S</text>
          <text transform="translate(883 900) scale(1.020 1)">E</text>
          <text transform="translate(1003.500 900) scale(1.140 1)">D</text>
          <text transform="translate(1112 900) scale(1.050 1)">B</text>
        </g>
      </svg>
      <div class="tabs">
        <div class="tab"><svg width="17" height="16"><rect width="17" height="16" rx="1" fill="#1f8c45"/><path d="M5 5h8v6H5z" fill="none" stroke="#fff" stroke-width="1.200"/><path d="M5 3.500h8M5 12.500h8" stroke="#f5d21e" stroke-width="2" stroke-dasharray="1.200 1"/></svg><span>MANUFACTURING</span></div>
        <div class="tab"><svg width="17" height="16"><use href="#fusion"/></svg><span>FUSION 360</span></div>
        <div class="tab"><svg width="17" height="16"><use href="#fusion"/></svg><span>FUSION TEAM</span></div>
      </div>
      <div class="recorder">
        <svg width="26" height="126"><g transform="translate(8.500 8)"><ellipse rx="4" ry="2.500" transform="rotate(-30)" fill="none" stroke="#fff" stroke-width="1.300"/><circle r="1.400" fill="#fff"/><path d="M-3 4L3-4" stroke="#fff"/></g><path d="M15 8.500h8" stroke="#fff" stroke-width="1.600" stroke-dasharray="2 1"/>
        <path d="M3 22h5l1.500-2h6l1.500 2h5v13H3z" fill="#fff"/><circle cx="13" cy="28.500" r="3.500" fill="#fff" stroke="#1c1c1c" stroke-width="1.500"/><path d="M3 48h13v3l6-3v12l-6-3v3H3z" fill="#fff"/><path d="M3 73h15v13H3z" fill="#bbb"/><path d="M6 76h16v14H6z" fill="#fff"/><g transform="translate(13 109)"><circle r="5" fill="none" stroke="#fff" stroke-width="5"/><path d="M0-9.500V-6M0 9.500V6M-8.200-4.700L-5-3M8.200-4.700L5-3M-8.200 4.700L-5 3M8.200 4.700L5 3" stroke="#fff" stroke-width="4.500"/></g></svg>
      </div>
      <div class="vscroll"><i></i></div>
    </div>
    <div class="hscroll"><i></i></div>
  </div>
</main>

<div class="status">
  <svg width="26" height="24"><path d="M21 2L5 13h7L8 22l16-11h-8z" fill="#14b24a"/></svg>
  <svg width="26" height="24"><circle cx="14.500" cy="12" r="10" fill="#606060"/><path d="M14.500 5v8.500" stroke="#fff" stroke-width="3"/><circle cx="14.500" cy="17.500" r="1.700" fill="#fff"/></svg>
</div>

<footer class="taskbar">
  <div class="cell start"><svg width="16" height="16"><path d="M0 2.200L7 1.200V7.600H0zM8 1L16 0V7.600H8zM0 8.600H7V15L0 14zM8 8.600H16V16L8 15z"/></svg></div>
  <div class="search">
    <svg width="18" height="18"><circle cx="11" cy="6.500" r="5.200" fill="none" stroke="#222" stroke-width="1.300"/><path d="M7.500 10.500L1 17" stroke="#222" stroke-width="1.300"/></svg>
    <span>Type here to search</span>
    <svg class="beach" width="76" height="38"><path d="M0 38L14 27q28-6 56 0l6 11z" fill="#f0c68c"/><path d="M24 22h30l4 7q-20 4-38 0z" fill="#57c2dc"/><path d="M25 28q14 4 28 0l2 3q-16 4-32 0z" fill="#fff3"/><path d="M65 10q3 10 2 23" fill="none" stroke="#9b6232" stroke-width="3.500"/><path d="M65 10q-3-6-9-5 1-4 7-1 0-4 4-4 0 3-1 5 6-3 7 2-5-1-7 2 4 1 4 5-4-1-6-4zM64 9q-6-1-8 4 4 0 8-4z" fill="#5c9b3c"/><path d="M13 15h8l5 16h-7zM55 15h9l-8 16h-7z" fill="#e8503f"/><path d="M13 15l7 19M21 15l5 16M14 35l14-11M18 35h-2M30 35l-6-8M64 15l-8 17M56 15l-7 16M63 35L50 25M47 35l7-9" fill="none" stroke="#7a4420" stroke-width="1.600"/></svg>
  </div>
  <div class="cell tv"><svg width="18" height="18"><path d="M1.500 5.500h9v8h-9zM1 1v2.500h10V1M1 18v-2.500h10V18M15.500 1v3M15.500 11v7" fill="none" stroke="#111" stroke-width="1.300"/><path d="M14 5.500h3v3h-3z"/></svg></div>
  <div class="cell edge"><svg width="24" height="24" viewBox="0 0 24 24"><defs><linearGradient id="edge" x1="0" x2="1"><stop offset="0" stop-color="#1b9de2"/><stop offset=".55" stop-color="#2fc3cf"/><stop offset="1" stop-color="#63d957"/></linearGradient></defs><circle cx="12" cy="12" r="12" fill="#1267b8"/><path d="M0 11A12 12 0 0 1 24 11q0 6-7 5.500-4-.5-2-3 1-4-4-4.500-7-.5-11 5z" fill="url(#edge)"/><path d="M14 13.500q-1.500 3 3 3.200 4 .2 6-2.500l1 3-3 2q-5 1.500-9-1-2-2.500 2-4.700z" fill="#d5e4ea"/><path d="M8 11q-3 8 5 12-10 1-12.500-8 3-5 7.500-4z" fill="#187cc9"/></svg></div>
  <div class="cell run"><svg width="24" height="22"><path d="M1 1h8l2 2h12v5H1z" fill="#e8a91d"/><path d="M1 4h22v15H1z" fill="#fcd462"/><path d="M4 21v-8q0-2 2-2h12q2 0 2 2v8h-4v-5H8v5z" fill="#2f86d6"/></svg></div>
  <div class="cell"><svg width="24" height="24"><path d="M0 9L12 1l12 8v14H0z" fill="#0f5ea8"/><path d="M2 8h20v10H2z" fill="#f4fafd"/><path d="M0 9l12 8 12-8v14H0z" fill="#28a8ea"/><path d="M0 23L14 14l10 9z" fill="#1687d4"/></svg></div>
  <div class="cell run"><svg width="24" height="24" viewBox="0 0 24 24"><circle cx="12" cy="12" r="12" fill="#2a9f48"/><path d="M12 12V0A12 12 0 0 1 22.400 6H12z" fill="#e33b2e"/><path d="M1.600 6A12 12 0 0 1 22.400 6H12L7 15z" fill="#e33b2e"/><path d="M22.400 6A12 12 0 0 1 12 24l5-9-5-9z" fill="#fbc116"/><circle cx="12" cy="12" r="5.600" fill="#fff"/><circle cx="12" cy="12" r="4.500" fill="#2f78e6"/></svg></div>
  <div class="cell run active"><svg width="18" height="24"><path d="M1 1L5 0H17V6H9V9.500H15V14H9V18.500H17L16 24H1L4 20V4z" fill="#c46f2c"/><path d="M1 1h14l2 2H7L4 5zM4 20l5-1.500h8L15 21H7l-6 3z" fill="#7e3f12"/></svg></div>
  <div class="cell run note"><svg width="20" height="24"><path d="M1 0h17v20l2 1v2H0l1-3z" fill="#c3d9ec"/><path d="M1 0h17v4H1z" fill="#49779c"/><path d="M1 21h17v2H1z" fill="#6f93b5"/><path d="M12 8h4M12 11h4M3 17h13" stroke="#4b86bd"/><text x="2" y="15" font-size="11" font-family="Liberation Serif" font-weight="bold" fill="#e0761c">A</text></svg></div>
  <div class="spacer"></div>
  <div class="nifty"><svg width="23" height="23"><path d="M0 17Q12 16 18 6l-4-2L22 0v9l-2-1Q14 18 0 17z" fill="#35a82c"/><path d="M0 20h3v3H0zM6 18h3v5H6zM12 15h4v8h-4zM18 10h4v13h-4z" fill="#68bd1c"/></svg><span>Nifty smlcap</span><em>+1.85%</em></div>
  <svg class="tray" width="121" height="22"><g fill="none" stroke="#111" stroke-width="1.300"><path d="M8.500 13.500l5.500-5.500 5.500 5.500"/><rect x="33.500" y="6.500" width="7" height="9" rx="1.500"/><path d="M40.500 9l3-1.500v7l-3-1.500M34 4q4-3 8 0M34 18.500q4 3 8 0"/><path d="M57 6.500h13v9H57zM63 16v3M60 18.500h7"/><path d="M54.500 4.500h4v4h-4z" fill="#cfdbe6"/><path d="M78 8.500h3l4-4v13l-4-4h-3zM87.500 8q2 3 0 6M90 6q4 5 0 10M92.500 4q5 7 0 14"/></g></svg>
  <span class="eng">ENG</span>
  <div class="clock"><span>11:12</span><span>07-08-2024</span></div>
  <svg class="notif" width="28" height="26"><path d="M1 1h16v13H8l-3 3v-3H1z"/><path d="M4 4.500h10M4 7.500h10M4 10.500h7" stroke="#fff"/><circle cx="16" cy="17" r="8" fill="#d6dbe0" stroke="#777"/><text x="16" y="21.500" text-anchor="middle" font-size="12" fill="#222">3</text></svg>
  <svg class="copilot" width="22" height="22"><defs><linearGradient id="cp" x1="0" y1="0" x2="0" y2="1"><stop offset="0" stop-color="#1673e0"/><stop offset=".5" stop-color="#2bb6c8"/><stop offset="1" stop-color="#e9c93b"/></linearGradient><linearGradient id="cq" x1="0" y1="0" x2="0" y2="1"><stop offset="0" stop-color="#9b59e8"/><stop offset="1" stop-color="#f2686f"/></linearGradient></defs><path d="M4 0h9q2 0 3 4l-5 2-3 8H3q-4 0-2-5l2-7z" fill="url(#cp)"/><path d="M12 5h5q4 0 3 5l-2 7H7q3-1 4-6z" fill="url(#cq)"/><rect x="5" y="13" width="16" height="7" rx="1" fill="#fcc40e"/><text x="7" y="19" font-size="6.500" font-weight="bold" textLength="12">PRE</text></svg>
  <i class="peek"></i>
</footer>
</body>
</html>
```

FILE: styles.css
```css
* { box-sizing: border-box; }
body { margin: 0; width: 1920px; height: 1080px; overflow: hidden; display: flex; flex-direction: column; background: #eee; color: #333; font-family: "Noto Sans", "Open Sans", sans-serif; font-size: 12px; }
svg { display: block; flex: none; }
i, b, em { font-style: normal; font-weight: normal; }
.defs { position: absolute; }

.titlebar { height: 23px; background: #fff; display: flex; align-items: center; padding-left: 3px; flex: none; color: #000; }
.app { margin-top: -1px; }
.caption { margin-left: 6px; font-size: 12px; white-space: nowrap; letter-spacing: -.3px; }
.winbtns { display: flex; margin-left: auto; margin-right: 2px; }

.menubar { height: 35px; flex: none; background: #cbcbcb; display: flex; align-items: center; gap: 10px; padding: 0 0 0 5px; border-bottom: 1px solid #b5b5b5; font-size: 13px; letter-spacing: -.15px; }

.toolbar { display: flex; align-items: center; flex: none; position: relative; }
.toolbar .btn { flex: none; display: flex; align-items: center; justify-content: center; position: relative; }
.main { height: 40px; background: #d9d9d9; border-bottom: 1px solid #999; }
.main .btn { width: 35px; height: 35px; }
.sep { width: 1px; height: 35px; margin: 0 4px; background: #bdbdbd; flex: none; }
.grip { width: 5px; height: 31px; margin: 0 4px 0 7px; border: solid #bdbdbd; border-width: 0 1px; flex: none; }
.main > .grip:first-child { margin-right: 3.5px; }
.grip.second { margin: 0 15px 0 8px; height: 34px; }
.drop::after { content: ""; position: absolute; right: 2px; bottom: 4px; border: 3px solid transparent; border-top: 5px solid #555; border-bottom: 0; }
.main .drop::after { bottom: 2px; }
.link { display: flex; align-items: center; gap: 3px; width: 64px; font-size: 8.5px; line-height: 8px; font-weight: 600; color: #444; letter-spacing: .1px; }
.quote { gap: 6px; }

.params { height: 41px; background: #eee; border-bottom: 1px solid #d8d8d8; }
.params .btn { width: 31px; height: 31px; margin: 0 1px; border-radius: 2px; }
.params > .grip { margin-right: 3.5px; }
.params .drop::after { bottom: 0; right: 0; }
.on { background: #d8d8d8; }
.lbl { flex: none; color: #333; padding-top: 2px; }
.layer { width: 52.5px; padding-left: 7px; }
.ang { width: 57px; padding-left: 11px; letter-spacing: .1px; }
.combo { height: 26px; border: 1px solid #8b8b8b; background: #fff; display: flex; align-items: center; flex: none; }
.combo span { padding-top: 1px; }
.value { letter-spacing: .5px; }
.wide { width: 129px; padding-left: 4px; }
.narrow { width: 51px; padding-left: 7px; }
.swatch { width: 20px; height: 20px; background: #3caadc; border: 1px solid #1c90c8; margin-right: 7px; }
.arrow { border: 3.5px solid transparent; border-top: 5px solid #666; border-bottom: 0; margin-left: auto; margin-right: 5px; }
.params .first { margin-left: 7.5px; }

.work { display: flex; height: 877px; flex: none; border-bottom: 1px solid #808080; }
.palette { width: 70px; border: solid #d4d4d4; border-width: 0 1px; background: #eee; flex: none; display: flex; flex-direction: column; }
.hgrip { height: 5px; width: 52px; margin: 7px 0 4px 8px; border: solid #c9c9c9; border-width: 1px 0; flex: none; }
.palette section { display: grid; grid-template-columns: 33px 33px; grid-auto-rows: 33px; border-bottom: 1px solid #c6c6c6; margin: 0 2px 1px 0; }
.palette section:last-of-type { border: 0; }
.palette section b { width: 29px; height: 29px; margin: 2px; display: flex; align-items: center; justify-content: center; position: relative; border-radius: 2px; }
.palette .drop::after { right: -1px; bottom: -1px; }
.more { margin: 34px 0 0 28px; }

.editor { flex: 1; display: flex; flex-direction: column; }
.cmdrow { height: 34px; display: flex; align-items: center; padding: 0 4px 0 7px; flex: none; }
.cmdrow span { width: 132px; letter-spacing: .2px; }
.cmd { flex: 1; height: 26px; margin-top: 0; background: #fff; border: 1px solid #0f93d2; display: flex; align-items: center; }
.canvas { position: relative; display: flex; width: 1850px; height: 826px; flex: none; }
.board text { font-family: "DejaVu Sans", sans-serif; }
.names text { fill: #a0a0a0; }
.board .owner { fill: #d6383a; font-family: "Liberation Sans", sans-serif; }
.board .pins text { fill: #8f8f8f; font-family: "Liberation Mono", monospace; }
.pins { font-size: 9px; }
.board .stamp text { font-family: "DejaVu Serif", serif; font-size: 110px; fill: #c3c3c3; stroke: #c3c3c3; stroke-width: 10px; stroke-miterlimit: 2; }
.tabs { position: absolute; left: 1804px; top: 9px; display: flex; flex-direction: column; gap: 15px; }
.tab { width: 27px; height: 146px; background: #434343; display: flex; flex-direction: column; align-items: center; color: #fff; padding-top: 8px; }
.tab span { writing-mode: vertical-rl; font-weight: 600; font-size: 11.5px; line-height: 14px; margin-top: 6px; }
.tab + .tab { padding-top: 18px; }
.tab + .tab span { margin-top: 11px; letter-spacing: .2px; }
.recorder { position: absolute; left: 1802px; top: 537px; width: 26px; height: 126px; border-radius: 3px; background: #1c1c1c; }
.vscroll, .hscroll { background: #f5f5f5; flex: none; }
.vscroll { width: 16px; height: 826px; padding-top: 236px; }
.vscroll i { display: block; height: 332px; border: solid #ededed; border-width: 0 5px; background: #808080; }
.hscroll { height: 16px; padding-left: 519px; }
.hscroll i { display: block; width: 970px; height: 16px; border: solid #ededed; border-width: 5px 0; background: #808080; }

.status { height: 24px; flex: none; background: #eee; display: flex; justify-content: flex-end; }
.status svg { border-left: 1px solid #d3d3d3; }

.taskbar { height: 40px; flex: none; display: flex; align-items: center; background: linear-gradient(90deg, #d7ebea, #d3e3e9 40%, #cfdce7 75%, #cad5e5); color: #111; font-family: "Open Sans", sans-serif; }
.cell { width: 45px; height: 40px; margin: 0 2px; display: flex; align-items: center; justify-content: center; border-bottom: 2px solid transparent; margin-right: 2.3px; }
.start { width: 48px; margin: 0; padding-left: 0; }
.search { width: 288px; height: 40px; background: #fff; border: 1px solid #c1c4c5; display: flex; align-items: center; padding-left: 11px; font-size: 15px; }
.search span { margin-left: 10px; letter-spacing: -.5px; }
.beach { margin-left: auto; margin-right: 1px; }
.tv { width: 44px; margin-left: 1px; }
.edge { margin-left: 4px; }
.run { border-color: #2b78cc; width: 40px; margin: 0 4.600px; }
.active { width: 46px; background: #eaf3f7; margin: 0 1px; }
.note { margin-left: 6px; }
.spacer { flex: 1; }
.nifty { display: flex; align-items: center; width: 181px; font-size: 15px; white-space: nowrap; }
.nifty span { margin-left: 9px; letter-spacing: -.7px; }
.nifty em { color: #1b8a1b; margin-left: 10px; letter-spacing: -.85px; }
.tray { width: 104px; margin-right: 0; }
.eng { width: 35px; font-size: 12px; }
.clock { width: 60px; display: flex; flex-direction: column; align-items: center; font-size: 12px; line-height: 18px; letter-spacing: -.4px; }
.notif { margin-left: 16px; margin-top: 4px; }
.copilot { margin-left: 10px; }
.peek { width: 1px; height: 40px; background: #9aa4b2; margin: 0 4px 0 16px; }
```
